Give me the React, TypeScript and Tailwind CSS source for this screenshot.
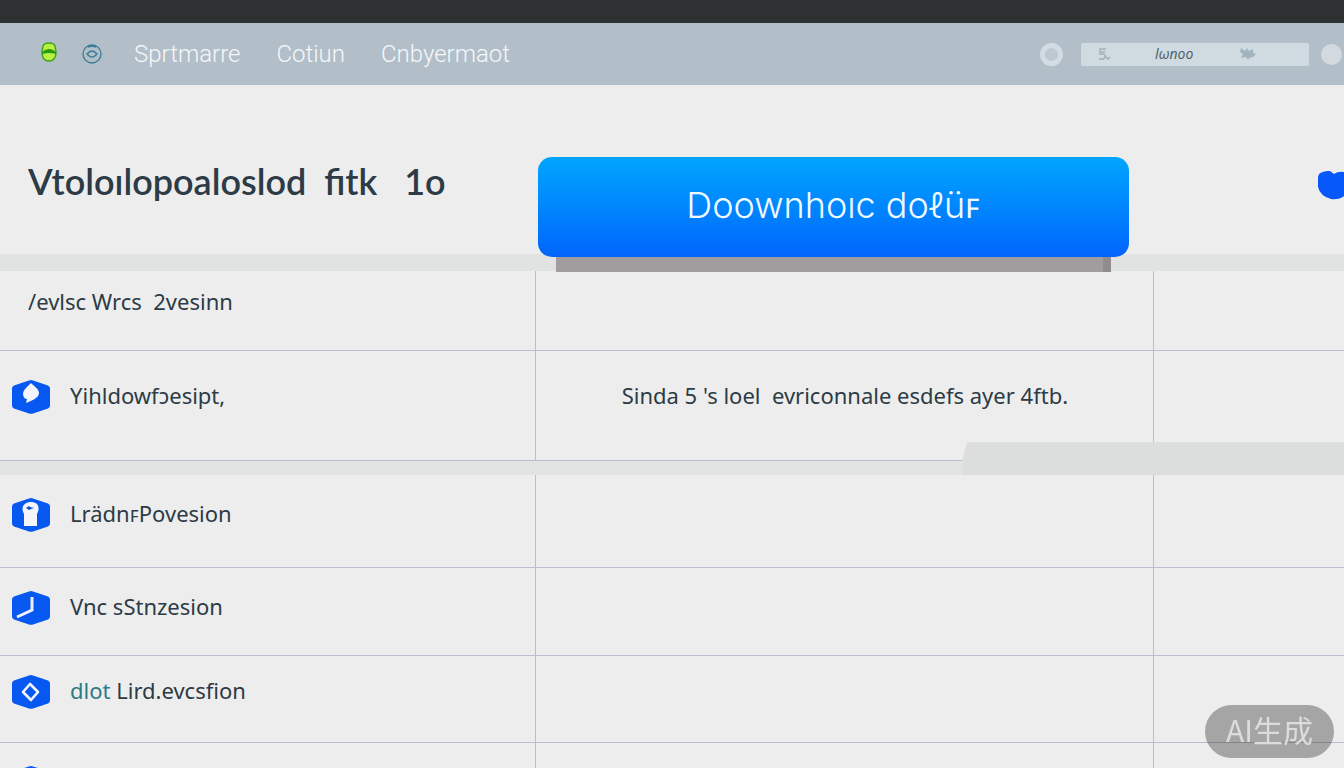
import type { ReactNode } from "react";

const glyphs: Record<string, ReactNode> = {
  pin: <path d="M19 4c-3 3-8 7-8 11 0 3 2 5 4 5l-1 4c5-2 13-5 13-10 0-4-5-7-8-10z" fill="#f3f5fb" />,
  lock: (
    <>
      <path d="M12 29V17c-4-8 1-12 7-12s10 4 6 12v12z" fill="#f3f5fb" />
      <path d="M14 11l3-2 1 1 4 1-3 1-2 1z" fill="#0b50d8" />
    </>
  ),
  clock: <path d="M20 7v13L5 27" fill="none" stroke="#e9f2fc" strokeWidth="3" />,
  diamond: <path d="M18 10l8 8-7 8-8-8z" fill="none" stroke="#f3f5fb" strokeWidth="2.600" strokeLinejoin="round" />,
  none: null,
};

function Hex({ glyph }: { glyph: string }) {
  return (
    <svg viewBox="0 0 38 36" preserveAspectRatio="none" className="h-9 w-[38px] shrink-0" aria-hidden="true">
      <path d="M17 1.400q2-.8 4 0l15 5q2 .8 2 3v17q0 2-2 3l-15 5q-2 .8-4 0l-15-5q-2-1-2-3v-17q0-2 2-3z" fill="#0758f0" />
      {glyphs[glyph]}
    </svg>
  );
}

const cell = "border-b border-r border-[#b9c0cb] p-0 align-top";
const last = "border-b border-[#b9c0cb] p-0 align-top";

function Row({ height, pad, glyph, label, detail }: { height: string; pad: string; glyph: string; label: ReactNode; detail?: string }) {
  return (
    <tr className={height}>
      <th scope="row" className={`${cell} ${pad} text-left font-normal`}>
        <div className="flex items-start gap-5 pl-3">
          <Hex glyph={glyph} />
          <span className="whitespace-pre">{label}</span>
        </div>
      </th>
      <td className={`${cell} ${pad} text-center whitespace-pre`}>{detail}</td>
      <td className={last} />
    </tr>
  );
}

export default function App() {
  return (
    <div className="h-screen overflow-hidden bg-[#ededed] font-['Noto_Sans','Noto_Sans_CJK_SC',sans-serif] text-[#2c3b45]">
      <div className="h-[23px] bg-[#2d3132]" />
      <nav className="flex h-[62px] items-center bg-[#b2bec8] pl-10">
        <svg viewBox="0 0 18 20" className="mb-1 h-5 w-[18px]" aria-hidden="true">
          <path d="M3 4Q4 1 9 1t6 3l1 6q0 9-7 9T2 10z" fill="#b9f044" stroke="#3fa51c" strokeWidth="1.500" />
          <path d="M2 10q7-6 14 0v2q-7-2-14 0z" fill="#249c16" />
        </svg>
        <svg viewBox="0 0 20 20" className="ml-6 h-5 w-5" fill="none" stroke="#387b99" strokeWidth="1.300" aria-hidden="true">
          <circle cx="10" cy="10" r="9" />
          <path d="M5 10q5-6 10 0-5 6-10 0zM6 3l4-1 4 1" />
        </svg>
        <div className="ml-8 flex items-center gap-9 font-[Roboto,sans-serif] text-2xl font-light text-[#f4f8fb]">
          <a href="#start">Sprtmarre</a>
          <a href="#section">Cotiun</a>
          <a href="#more">Cnbyermaot</a>
        </div>
        <button aria-label="Reload" className="ml-auto size-[23px] rounded-full border-[5px] border-[#d2dce2] bg-[#bdc8d0]" />
        <div className="ml-[18px] flex h-[23px] w-[228px] items-center rounded-xs bg-[#d0dbe1] px-4">
          <svg viewBox="0 0 14 12" className="h-3 w-3.5" fill="none" stroke="#a4b1b9" strokeWidth="1.600" aria-hidden="true">
            <path d="M9 1H3v3h5M2 6h5q3 3-1 5H2m7-2 2 2 2-2" />
          </svg>
          <input aria-label="Address" defaultValue="lωnoo" className="ml-11 w-12 bg-transparent text-sm text-[#51616c] italic outline-none" />
          <svg viewBox="0 0 18 14" className="ml-9 h-3.5 w-[18px]" aria-hidden="true">
            <path d="M2 1l4 3 2-3 2 3 4-2v4l3 1-3 3-4 1-1 2-2-3-5 1 2-4-3-2z" fill="#a4b4be" />
          </svg>
        </div>
        <span className="mr-0.5 ml-3 size-[21px] shrink-0 rounded-full bg-[#d2dadf]" />
      </nav>

      <header className="grid h-[169px] grid-cols-[40%_44%_16%]">
        <h1 className="pt-[76px] pl-7 font-[Lato,sans-serif] text-4xl font-semibold whitespace-pre">Vtoloılopoaloslod  fitk   1o</h1>
        <div className="relative z-10 mt-[72px] h-[100px]">
          <div className="absolute inset-x-[18px] top-full h-[15px] border-r-8 border-[#8f8d8e] bg-[#a19c9e]" />
          <button className="relative h-full w-full rounded-[14px] bg-linear-to-b from-[#00a5ff] to-[#0464fb] pb-1 font-[Inter,sans-serif] text-4xl font-light text-[#f0fbff]">
            Doownhoıc do&#x2113;üꜰ
          </button>
        </div>
        <svg viewBox="0 0 27 30" className="mt-[85px] h-[30px] w-[27px] justify-self-end" aria-hidden="true">
          <path d="M1 8C1 3 5 1 13 1l4 3q4-3 10-2v24q-5 4-13 3Q3 26 1 17z" fill="#0758fa" />
        </svg>
      </header>
      <div className="h-[17px] bg-[#e1e2e2]" />

      <table className="w-full table-fixed border-separate border-spacing-0 text-[22px] leading-8">
        <colgroup>
          <col className="w-[39.9%]" />
          <col className="w-[46%]" />
          <col className="w-[14.1%]" />
        </colgroup>
        <tbody>
          <tr className="h-20">
            <th scope="row" className={`${cell} pt-3.5 pl-7 text-left font-normal`}>
              <span className="whitespace-pre">/evlsc Wrcs  2vesinn</span>
            </th>
            <td className={cell} />
            <td className={last} />
          </tr>
          <Row height="h-[110px]" pad="pt-7" glyph="pin" label="Yihldowfɔesipt," detail="Sinda 5 's loel  evriconnale esdefs ayer 4ftb." />
          <tr className="h-3.5">
            <td colSpan={3} className="relative bg-[#e2e3e3] p-0">
              <div className="absolute right-0 bottom-0 h-[33px] w-[28.4%] bg-[#dcdedd] [clip-path:polygon(5px_0,100%_0,100%_100%,0_100%,0_18px)]" />
            </td>
          </tr>
          <Row height="h-[93px]" pad="pt-[22px]" glyph="lock" label="LrädnꜰPovesion" />
          <Row height="h-[88px]" pad="pt-[22px]" glyph="clock" label="Vnc sStnzesion" />
          <Row
            height="h-[87px]"
            pad="pt-[18px]"
            glyph="diamond"
            label={
              <>
                <span className="text-[#2b7d86]">dlot</span> Lird.evcsfion
              </>
            }
          />
          <Row height="h-[88px]" pad="pt-[22px]" glyph="none" label="" />
        </tbody>
      </table>

      <div className="fixed right-2.5 bottom-2.5 z-20 flex h-[53px] w-[129px] items-center justify-center rounded-full bg-black/30 pb-1.5 font-['Noto_Sans_CJK_SC',sans-serif] text-3xl text-[#dcdcdc]">
        AI生成
      </div>
    </div>
  );
}
